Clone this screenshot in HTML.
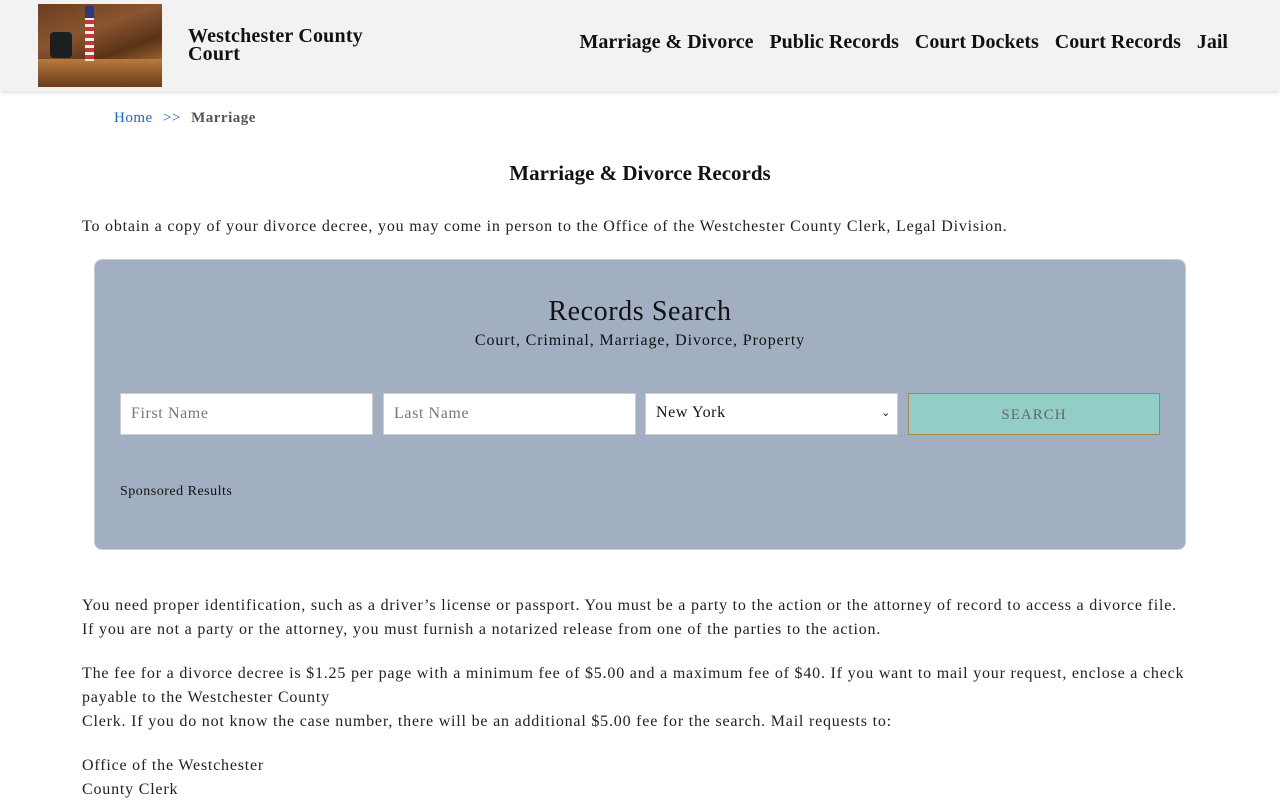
<!DOCTYPE html>
<html><head><meta charset="utf-8">
<style>
*{box-sizing:border-box;margin:0;padding:0}
body{width:1280px;height:800px;overflow:hidden;background:#fff;font-family:"Liberation Serif",serif;color:#222}
.hdr{height:91px;background:#f2f2f2;box-shadow:0 2px 4px rgba(0,0,0,.12);position:relative}
.logo{position:absolute;left:38px;top:4px;width:124px;height:83px;background:linear-gradient(160deg,#6b3e1e 0%,#8a5530 35%,#5a3318 60%,#a0652e 80%,#7a4420 100%)}
.logo .ch{position:absolute;left:12px;top:28px;width:22px;height:26px;background:#1c1f22;border-radius:4px}
.logo .fl{position:absolute;left:47px;top:2px;width:9px;height:55px;background:repeating-linear-gradient(#c33 0 4px,#eee 4px 7px)}
.logo .fl:before{content:"";position:absolute;left:0;top:0;width:9px;height:12px;background:#2a3a7a}
.logo .desk{position:absolute;left:0;top:55px;width:124px;height:28px;background:linear-gradient(#b87a40,#6a3a18)}
.title{position:absolute;left:188px;top:27px;font-size:20px;font-weight:bold;line-height:18px;color:#111;letter-spacing:0.2px}
.nav{position:absolute;right:52px;top:31px;font-size:20px;font-weight:bold;color:#111}
.nav span{margin-left:16px}
.bc{position:absolute;left:114px;top:110px;font-size:15px;letter-spacing:0.5px}
.bc a{color:#1a66d0;text-decoration:none}
.bc b{color:#555}
h1{position:absolute;left:0;width:1280px;top:161px;text-align:center;font-size:21px;color:#111}
p{position:absolute;left:82px;font-size:16px;line-height:24px;color:#222;letter-spacing:0.8px;white-space:nowrap}
.box{position:absolute;left:94px;top:259px;width:1092px;height:291px;background:#a2aec1;border-radius:8px;border:1px solid #c8cfd9}
.box h2{position:absolute;left:0;width:100%;top:36px;text-align:center;font-size:28px;font-weight:normal;color:#111;letter-spacing:0.6px}
.box .sub{position:absolute;left:0;width:100%;top:72px;text-align:center;font-size:16px;color:#111;letter-spacing:0.9px}
.in{position:absolute;top:133px;height:42px;width:253px;background:#fff;border:1px solid #ccc;font-size:16px;color:#777;padding:11px 10px;letter-spacing:0.6px}
.btn{position:absolute;left:813px;top:133px;width:252px;height:42px;background:#92cdc6;border:1px solid #a08a4a;text-align:center;font-size:15px;letter-spacing:1px;color:#666;padding-top:13px}
.sp{position:absolute;left:25px;top:224px;font-size:14px;color:#111;letter-spacing:0.5px}
</style></head><body>
<div class="hdr">
 <div class="logo"><div class="desk"></div><div class="ch"></div><div class="fl"></div></div>
 <div class="title">Westchester County<br>Court</div>
 <div class="nav"><span>Marriage &amp; Divorce</span><span>Public Records</span><span>Court Dockets</span><span>Court Records</span><span>Jail</span></div>
</div>
<div class="bc"><a>Home</a> <a style="margin:0 6px">&gt;&gt;</a> <b>Marriage</b></div>
<h1>Marriage &amp; Divorce Records</h1>
<p style="top:215px">To obtain a copy of your divorce decree, you may come in person to the Office of the Westchester County Clerk, Legal Division.</p>
<div class="box">
 <h2>Records Search</h2>
 <div class="sub">Court, Criminal, Marriage, Divorce, Property</div>
 <div class="in" style="left:25px">First Name</div>
 <div class="in" style="left:288px">Last Name</div>
 <div class="in" style="left:550px;color:#111;padding-top:10px">New York<span style="position:absolute;right:6px;top:12px;font-size:11px">&#8964;</span></div>
 <div class="btn">SEARCH</div>
 <div class="sp">Sponsored Results</div>
</div>
<p style="top:594px">You need proper identification, such as a driver’s license or passport. You must be a party to the action or the attorney of record to access a divorce file.<br>If you are not a party or the attorney, you must furnish a notarized release from one of the parties to the action.</p>
<p style="top:662px">The fee for a divorce decree is $1.25 per page with a minimum fee of $5.00 and a maximum fee of $40. If you want to mail your request, enclose a check<br>payable to the Westchester County<br>Clerk. If you do not know the case number, there will be an additional $5.00 fee for the search. Mail requests to:</p>
<p style="top:754px">Office of the Westchester<br>County Clerk</p>
</body></html>
